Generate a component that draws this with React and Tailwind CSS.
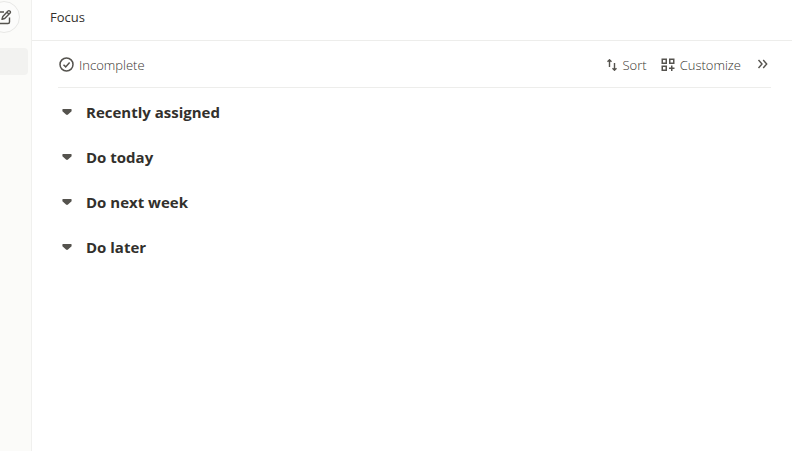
const sections = ["Recently assigned", "Do today", "Do next week", "Do later"];

function ComposeIcon() {
  return (
    <svg className="size-4 shrink-0" viewBox="0 0 16 16" fill="none" stroke="currentColor" strokeWidth="1.4" strokeLinejoin="round" aria-hidden="true">
      <path d="M8 3H2.500A1.500 1.500 0 0 0 1 4.500v8.500a1.500 1.500 0 0 0 1.500 1.500H12a1.500 1.500 0 0 0 1.500-1.500V8.500" />
      <path d="M6 10.200l.8-2.700L12 2a1.200 1.200 0 0 1 1.800 0l.3.300a1.200 1.200 0 0 1 0 1.700L8.700 9.500z" />
      <path d="M11 3.200l2 2" />
    </svg>
  );
}

function CheckIcon() {
  return (
    <svg className="size-4 shrink-0" viewBox="0 0 16 16" fill="none" stroke="currentColor" strokeWidth="1.5" aria-hidden="true">
      <circle cx="8.500" cy="7.500" r="6.500" />
      <path d="M5.500 7.800l2.200 2.100 3.900-4.400" />
    </svg>
  );
}

function SortIcon() {
  return (
    <svg className="h-3 w-3 shrink-0" viewBox="0 0 12 12" fill="none" stroke="currentColor" strokeWidth="1.400" aria-hidden="true">
      <path d="M3.500 8V.800M1.500 2.800l2-2 2 2" />
      <path d="M8.500 4v7.200M6.500 9.200l2 2 2-2" />
    </svg>
  );
}

function CustomizeIcon() {
  return (
    <svg className="size-3.5 shrink-0" viewBox="0 0 14 14" fill="none" stroke="currentColor" strokeWidth="1.500" aria-hidden="true">
      <rect x="1.250" y="1.250" width="4" height="4" />
      <rect x="8.750" y="1.250" width="4" height="4" />
      <rect x="1.250" y="8.250" width="4" height="4" />
      <path d="M10.750 7.500v5.500M8 10.250h5.500" />
    </svg>
  );
}

function MoreIcon() {
  return (
    <svg className="size-3 shrink-0" viewBox="0 0 12 12" fill="none" stroke="currentColor" strokeWidth="1.400" aria-hidden="true">
      <path d="M1.500 1L5 5l-3.500 4M6.200 1l3.500 4-3.500 4" />
    </svg>
  );
}

export default function App() {
  return (
    <div className="flex min-h-screen bg-white font-['Open_Sans','Noto_Sans',sans-serif] text-[#55534e]">
      <aside className="flex w-8 shrink-0 flex-col items-end overflow-hidden border-r border-[#f0f0ee] bg-[#fbfbf9] pt-px">
        <button type="button" aria-label="Compose" className="mr-[11px] flex size-8 shrink-0 items-center justify-center rounded-full border border-[#e8e8e6] bg-[#fcfcfb]">
          <ComposeIcon />
        </button>
        <button type="button" aria-label="Current page" className="mt-[15px] mr-[3px] h-[27px] w-10 shrink-0 rounded-sm bg-[#f2f2f0]" />
      </aside>
      <main className="min-w-0 flex-1">
        <header className="flex h-[41px] items-start border-b border-[#ededeb] px-[18px] pt-[7px]">
          <h1 className="text-[13px] leading-5 text-[#32302c]">Focus</h1>
        </header>
        <div className="pr-[21px] pl-[26px]">
          <div className="flex h-[47px] items-center justify-between border-b border-[#ededeb] pt-0.5 text-[13px] leading-5">
            <button type="button" className="flex items-center gap-[5px]">
              <CheckIcon />
              <span className="font-light text-[#37352f]">Incomplete</span>
            </button>
            <div className="flex items-center">
              <button type="button" className="flex items-center gap-[5px]">
                <SortIcon />
                <span className="font-light text-[#37352f]">Sort</span>
              </button>
              <button type="button" className="ml-3.5 flex items-center gap-[5px]">
                <CustomizeIcon />
                <span className="font-light text-[#37352f]">Customize</span>
              </button>
              <button type="button" aria-label="More" className="mr-0.5 ml-4">
                <MoreIcon />
              </button>
            </div>
          </div>
          <div className="flex flex-col pt-0.5">
            {sections.map((name) => (
              <h2 key={name} className="h-[45px] text-[15px] font-bold text-[#32302c]">
                <button type="button" className="flex h-[45px] items-center gap-3.5">
                  <svg className="ml-1 h-2 w-2.5 shrink-0 text-[#55534e]" viewBox="0 0 10 8" fill="currentColor" aria-hidden="true">
                    <path d="M1 0h8q1 .3.600 1.300v1L6 5.500q-1 .9-2 0L.4 2.300v-1Q0 .3 1 0z" />
                  </svg>
                  {name}
                </button>
              </h2>
            ))}
          </div>
        </div>
      </main>
    </div>
  );
}
